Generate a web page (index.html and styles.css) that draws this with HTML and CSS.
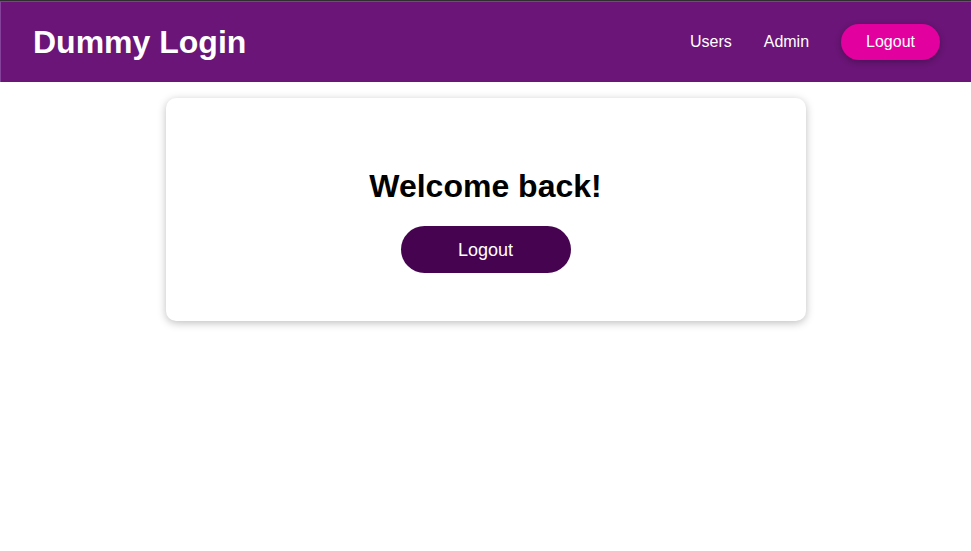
FILE: index.html
```html
<!DOCTYPE html>
<html lang="en">
<head>
<meta charset="utf-8">
<title>Dummy Login</title>
<link rel="stylesheet" href="styles.css">
</head>
<body>
<header class="main-header">
  <h1>Dummy Login</h1>
  <nav class="nav">
    <ul>
      <li><a href="#">Users</a></li>
      <li><a href="#">Admin</a></li>
      <li><button type="button">Logout</button></li>
    </ul>
  </nav>
</header>
<main>
  <section class="card home">
    <h1>Welcome back!</h1>
    <button class="button" type="button">Logout</button>
  </section>
</main>
</body>
</html>
```
FILE: styles.css
```css
* {
  box-sizing: border-box;
}

body {
  margin: 0;
  font-family: "Liberation Sans", Arial, sans-serif;
  background: #fff;
  border-top: 1px solid #2f2f2f;
}

.main-header {
  display: flex;
  justify-content: space-between;
  align-items: center;
  padding: 22px 31px 22px 32px;
  background: #6a1577;
  border-top: 1px solid #5f5a60;
  border-left: 1px solid #84429a;
}

.main-header h1 {
  margin: 0;
  font-size: 32px;
  line-height: 36px;
  color: #fff;
}

.nav ul {
  display: flex;
  align-items: center;
  gap: 32px;
  margin: 0;
  padding: 0;
  list-style: none;
}

.nav a {
  color: #fff;
  font-size: 16px;
  text-decoration: none;
}

.nav button {
  display: block;
  height: 36px;
  padding: 0 25px;
  font: inherit;
  color: #fff;
  background: #e2009e;
  border: 0;
  border-radius: 20px;
  box-shadow: 0 2px 6px rgba(0, 0, 0, 0.26);
}

.card {
  width: 90%;
  max-width: 640px;
  margin: 16px auto;
  padding: 68px 48px 48px;
  text-align: center;
  background: #fff;
  border-radius: 10px;
  box-shadow: 0 2px 8px rgba(0, 0, 0, 0.26);
}

.card h1 {
  margin: 0 0 20px;
  font-size: 32px;
  line-height: 40px;
}

.button {
  width: 170px;
  height: 47px;
  padding: 2px 0 0;
  font-family: inherit;
  font-size: 18px;
  color: #fff;
  background: #460450;
  border: 0;
  border-radius: 24px;
}
```
